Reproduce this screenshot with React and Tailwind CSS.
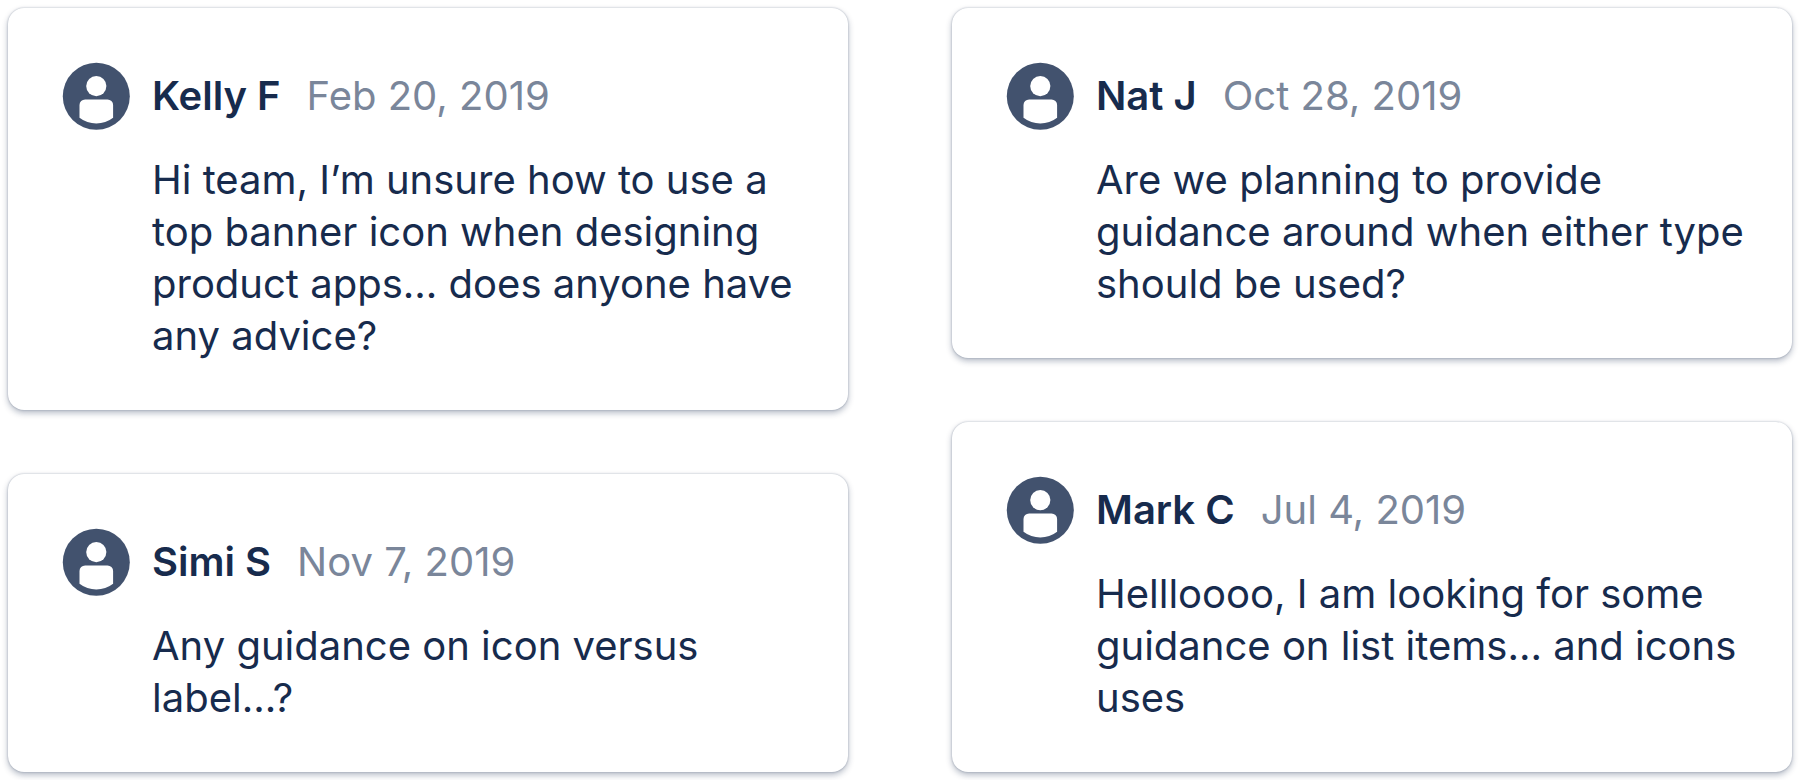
const columns = [
  [
    {
      name: 'Kelly F',
      date: 'Feb 20, 2019',
      text: 'Hi team, I’m unsure how to use a top banner icon when designing product apps... does anyone have any advice?',
    },
    { name: 'Simi S', date: 'Nov 7, 2019', text: 'Any guidance on icon versus label...?' },
  ],
  [
    {
      name: 'Nat J',
      date: 'Oct 28, 2019',
      text: 'Are we planning to provide guidance around when either type should be used?',
    },
    {
      name: 'Mark C',
      date: 'Jul 4, 2019',
      text: 'Hellloooo, I am looking for some guidance on list items... and icons uses',
    },
  ],
];

function Avatar() {
  return (
    <svg viewBox="0 0 68 68" className="size-17 shrink-0" aria-hidden="true">
      <circle cx="34.3" cy="34.3" r="33.5" fill="#42526E" />
      <circle cx="34.3" cy="24.1" r="10.1" fill="#fff" />
      <path
        d="M17.5 43a5.6 5.6 0 0 1 5.6-5.6h22.4a5.6 5.6 0 0 1 5.6 5.6v12.8a27.5 27.5 0 0 1-33.6 0z"
        fill="#fff"
      />
    </svg>
  );
}

function CommentCard({ name, date, text }) {
  return (
    <article className="rounded-2xl bg-white pt-[54px] pr-10 pb-12 pl-[54px] shadow-[0_0_2px_rgba(9,30,66,0.31),0_3px_6px_rgba(9,30,66,0.3)]">
      <header className="flex items-center">
        <Avatar />
        <h2 className="ml-[22px] text-[40px] leading-[52px] font-semibold">{name}</h2>
        <time className="ml-[26px] text-[40px] leading-[52px] text-[#7A869A]">{date}</time>
      </header>
      <p className="mt-6 ml-[90px] text-[40px] leading-[52px]">{text}</p>
    </article>
  );
}

export default function App() {
  return (
    <main className="grid grid-cols-2 gap-26 bg-white p-2 font-['Inter',sans-serif] text-[#172B4D]">
      {columns.map((comments, i) => (
        <div key={i} className="flex flex-col gap-16">
          {comments.map((comment) => (
            <CommentCard key={comment.name} {...comment} />
          ))}
        </div>
      ))}
    </main>
  );
}
